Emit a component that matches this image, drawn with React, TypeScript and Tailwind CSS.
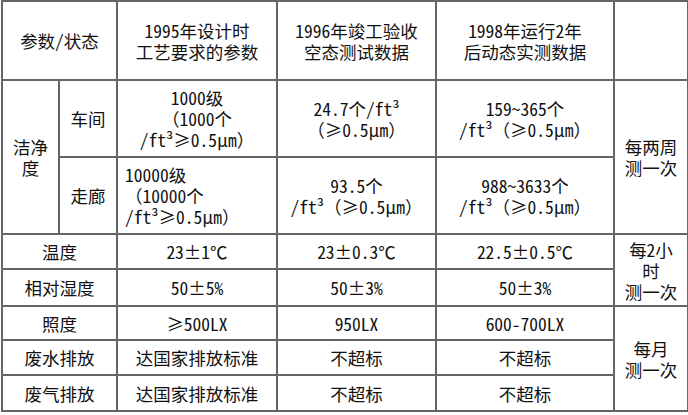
const cell = "border-2 border-[#666] text-center align-middle p-0";

const App = () => {
  return (
    <div className="w-[688px] h-[415px] bg-white pl-px font-['Noto_Sans_Mono_CJK_SC','Noto_Sans_CJK_SC',sans-serif] text-[17.5px] leading-[21px] text-[#111]">
      <table className="table-fixed border-collapse w-[686px]">
        <colgroup>
          <col className="w-[57px]" />
          <col className="w-[58px]" />
          <col className="w-[160px]" />
          <col className="w-[159px]" />
          <col className="w-[178px]" />
          <col className="w-[74px]" />
        </colgroup>
        <tbody>
          <tr className="h-[79px]">
            <td colSpan={2} className={cell}>参数/状态</td>
            <td className={cell}>1995年设计时<br />工艺要求的参数</td>
            <td className={cell}>1996年竣工验收<br />空态测试数据</td>
            <td className={cell}>1998年运行2年<br />后动态实测数据</td>
            <td className={cell}></td>
          </tr>
          <tr className="h-[77px]">
            <td rowSpan={2} className={cell}>洁净<br />度</td>
            <td className={cell}>车间</td>
            <td className={cell}>1000级<br />（1000个<br />/ft³≥0.5μm）</td>
            <td className={cell}>24.7个/ft³<br />（≥0.5μm）</td>
            <td className={cell}>159~365个<br />/ft³（≥0.5μm）</td>
            <td rowSpan={2} className={cell}>每两周<br />测一次</td>
          </tr>
          <tr className="h-[77px]">
            <td className={cell}>走廊</td>
            <td className={`${cell} !text-left pl-[7px]`}>10000级<br />（10000个<br />/ft³≥0.5μm）</td>
            <td className={cell}>93.5个<br />/ft³（≥0.5μm）</td>
            <td className={cell}>988~3633个<br />/ft³（≥0.5μm）</td>
          </tr>
          <tr className="h-[35px]">
            <td colSpan={2} className={cell}>温度</td>
            <td className={cell}>23±1℃</td>
            <td className={cell}>23±0.3℃</td>
            <td className={cell}>22.5±0.5℃</td>
            <td rowSpan={2} className={cell}>每2小<br />时<br />测一次</td>
          </tr>
          <tr className="h-[37px]">
            <td colSpan={2} className={cell}>相对湿度</td>
            <td className={cell}>50±5%</td>
            <td className={cell}>50±3%</td>
            <td className={cell}>50±3%</td>
          </tr>
          <tr className="h-[34px]">
            <td colSpan={2} className={cell}>照度</td>
            <td className={cell}>≥500LX</td>
            <td className={cell}>950LX</td>
            <td className={cell}>600-700LX</td>
            <td rowSpan={3} className={cell}>每月<br />测一次</td>
          </tr>
          <tr className="h-[35px]">
            <td colSpan={2} className={cell}>废水排放</td>
            <td className={cell}>达国家排放标准</td>
            <td className={cell}>不超标</td>
            <td className={cell}>不超标</td>
          </tr>
          <tr className="h-[36px]">
            <td colSpan={2} className={cell}>废气排放</td>
            <td className={cell}>达国家排放标准</td>
            <td className={cell}>不超标</td>
            <td className={cell}>不超标</td>
          </tr>
        </tbody>
      </table>
    </div>
  );
};

export default App;
